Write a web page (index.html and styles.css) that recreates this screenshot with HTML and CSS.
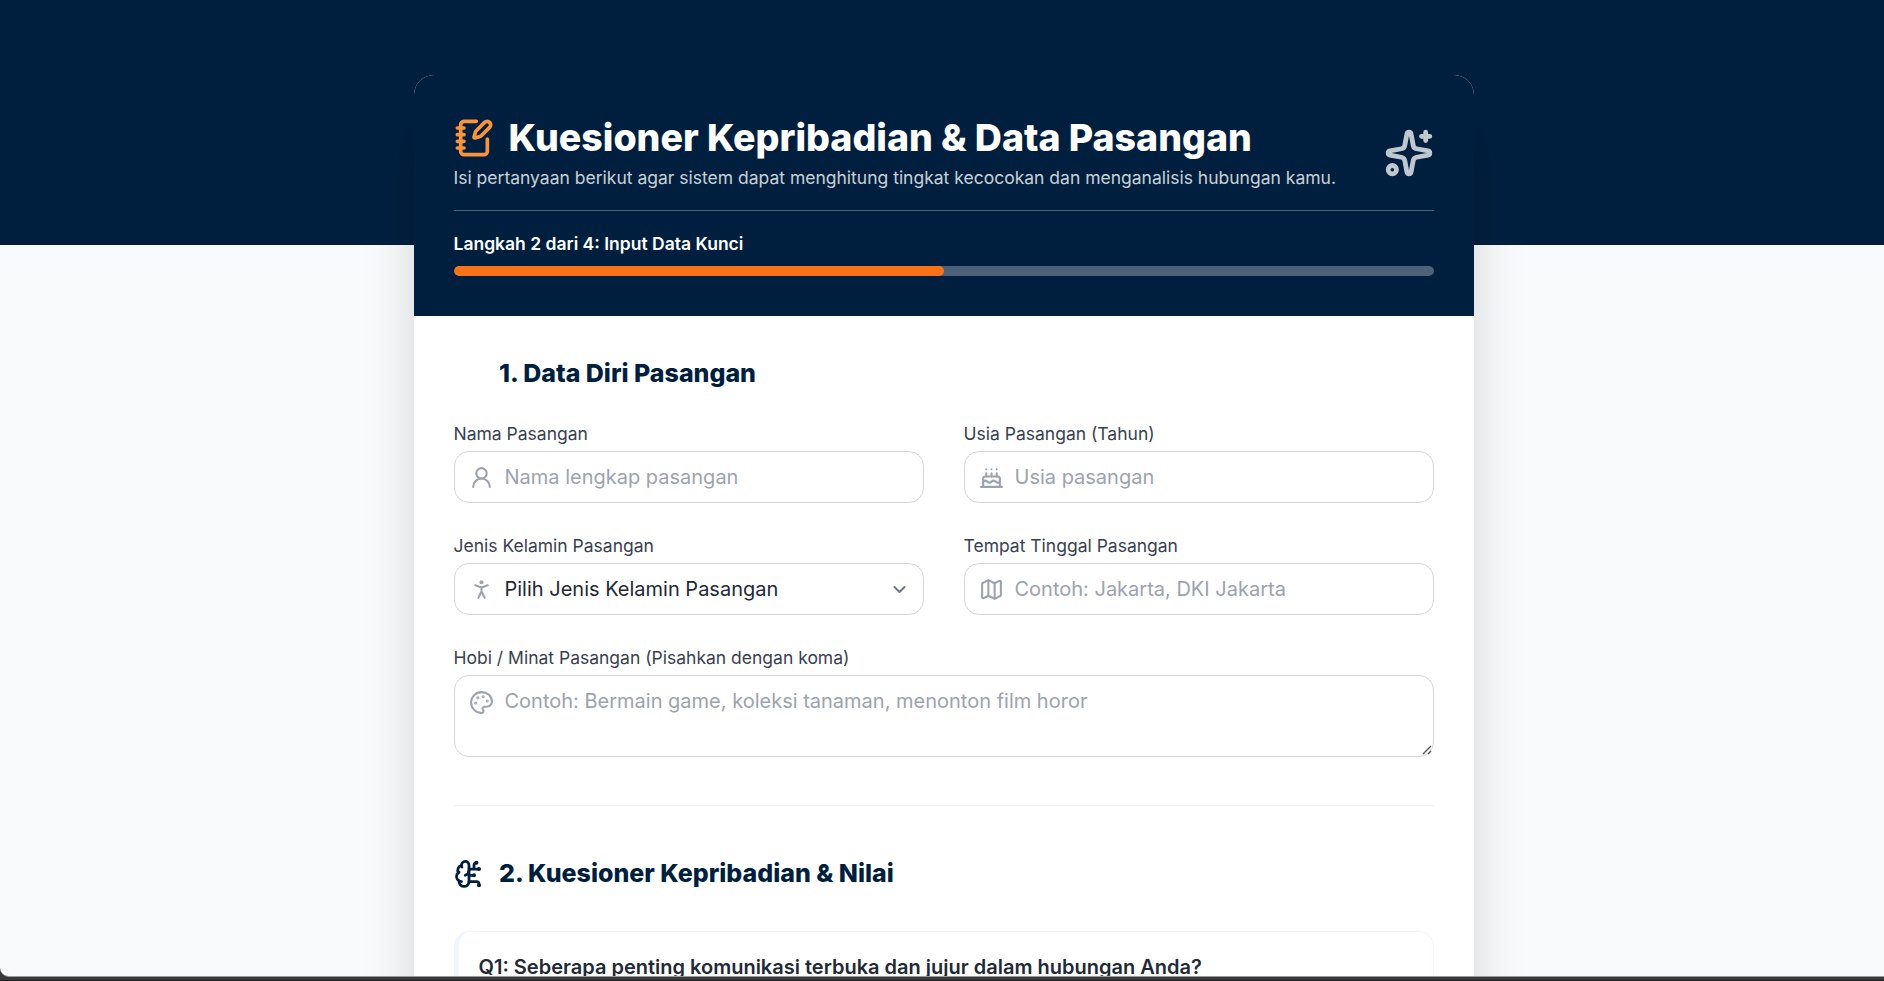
FILE: index.html
```html
<!DOCTYPE html>
<html lang="id">
<head>
<meta charset="utf-8">
<title>Kuesioner Kepribadian &amp; Data Pasangan</title>
<link rel="stylesheet" href="styles.css">
</head>
<body>
<div class="window">
  <div class="hero"></div>
  <main class="card">
    <header class="card-header">
      <div class="heading-row">
        <div>
          <h1 class="title">
            <svg class="icon title-icon" viewBox="0 0 24 24"><path d="M13.4 2H6a2 2 0 0 0-2 2v16a2 2 0 0 0 2 2h12a2 2 0 0 0 2-2v-7.4"/><path d="M2 6h4M2 10h4M2 14h4M2 18h4"/><path d="M21.378 5.626a1 1 0 1 0-3.004-3.004l-5.01 5.012a2 2 0 0 0-.506.854l-.837 2.87a.5.5 0 0 0 .62.62l2.87-.837a2 2 0 0 0 .854-.506z"/></svg>
            <span>Kuesioner Kepribadian &amp; Data Pasangan</span>
          </h1>
          <p class="subtitle">Isi pertanyaan berikut agar sistem dapat menghitung tingkat kecocokan dan menganalisis hubungan kamu.</p>
        </div>
        <svg class="icon sparkles" viewBox="0 0 24 24"><path d="M11.017 2.814a1 1 0 0 1 1.966 0l1.051 5.558a2 2 0 0 0 1.594 1.594l5.558 1.051a1 1 0 0 1 0 1.966l-5.558 1.051a2 2 0 0 0-1.594 1.594l-1.051 5.558a1 1 0 0 1-1.966 0l-1.051-5.558a2 2 0 0 0-1.594-1.594l-5.558-1.051a1 1 0 0 1 0-1.966l5.558-1.051a2 2 0 0 0 1.594-1.594z"/><path d="M20 2v4M22 4h-4"/><circle cx="4" cy="20" r="2"/></svg>
      </div>
      <div class="progress">
        <p class="step">Langkah 2 dari 4: Input Data Kunci</p>
        <div class="track"><div class="fill" style="width:50%"></div></div>
      </div>
    </header>
    <form class="body">
      <section class="section">
        <h2 class="section-title"><span class="section-icon"></span>1. Data Diri Pasangan</h2>
        <div class="grid">
          <label class="field"><span class="label">Nama Pasangan</span>
            <span class="control">
              <svg class="icon field-icon" viewBox="0 0 24 24"><circle cx="12" cy="8" r="5"/><path d="M20 21a8 8 0 0 0-16 0"/></svg>
              <input class="input" type="text" placeholder="Nama lengkap pasangan">
            </span>
          </label>
          <label class="field"><span class="label">Usia Pasangan (Tahun)</span>
            <span class="control">
              <svg class="icon field-icon" viewBox="0 0 24 24"><path d="M20 21v-8a2 2 0 0 0-2-2H6a2 2 0 0 0-2 2v8"/><path d="M4 16s.5-1 2-1 2.5 2 4 2 2.5-2 4-2 2.5 2 4 2 2-1 2-1"/><path d="M2 21h20M7 8v3M12 8v3M17 8v3M7 4h.01M12 4h.01M17 4h.01"/></svg>
              <input class="input" type="text" placeholder="Usia pasangan">
            </span>
          </label>
          <label class="field"><span class="label">Jenis Kelamin Pasangan</span>
            <span class="control">
              <svg class="icon field-icon" viewBox="0 0 24 24"><circle cx="12" cy="5" r="1"/><path d="m9 20 3-6 3 6M6 8l6 2 6-2M12 10v4"/></svg>
              <select class="input select"><option>Pilih Jenis Kelamin Pasangan</option></select>
              <svg class="chevron" viewBox="0 0 20 20"><path d="M6 8l4 4 4-4"/></svg>
            </span>
          </label>
          <label class="field"><span class="label">Tempat Tinggal Pasangan</span>
            <span class="control">
              <svg class="icon field-icon" viewBox="0 0 24 24"><path d="M14.106 5.553a2 2 0 0 0 1.788 0l3.659-1.83A1 1 0 0 1 21 4.619v12.764a1 1 0 0 1-.553.894l-4.553 2.277a2 2 0 0 1-1.788 0l-4.212-2.106a2 2 0 0 0-1.788 0l-3.659 1.83A1 1 0 0 1 3 19.381V6.618a1 1 0 0 1 .553-.894l4.553-2.277a2 2 0 0 1 1.788 0z"/><path d="M15 5.764v15M9 3.236v15"/></svg>
              <input class="input" type="text" placeholder="Contoh: Jakarta, DKI Jakarta">
            </span>
          </label>
          <label class="field wide"><span class="label">Hobi / Minat Pasangan (Pisahkan dengan koma)</span>
            <span class="control area">
              <svg class="icon field-icon" viewBox="0 0 24 24"><path d="M12 22a1 1 0 0 1 0-20 10 9 0 0 1 10 9 5 5 0 0 1-5 5h-2.25a1.75 1.75 0 0 0-1.4 2.8l.3.4a1.75 1.75 0 0 1-1.4 2.8z"/><g fill="currentColor"><circle cx="13.5" cy="6.5" r=".5"/><circle cx="17.5" cy="10.5" r=".5"/><circle cx="6.5" cy="12.5" r=".5"/><circle cx="8.5" cy="7.5" r=".5"/></g></svg>
              <textarea class="input textarea" placeholder="Contoh: Bermain game, koleksi tanaman, menonton film horor"></textarea>
              <svg class="grip" viewBox="0 0 10 10"><path d="M1 9L9 1M6 9L9 6"/></svg>
            </span>
          </label>
        </div>
      </section>
      <section class="section values">
        <h2 class="section-title"><svg class="icon section-icon" viewBox="0 0 24 24"><path d="M12 5a3 3 0 1 0-5.997.125 4 4 0 0 0-2.526 5.77 4 4 0 0 0 .556 6.588A4 4 0 1 0 12 18Z"/><path d="M9 13a4.5 4.5 0 0 0 3-4M6.003 5.125A3 3 0 0 0 6.401 6.5M3.477 10.896a4 4 0 0 1 .585-.396M6 18a4 4 0 0 1-1.967-.516M12 13h4M12 18h6a2 2 0 0 1 2 2v1M12 8h8M16 8V5a2 2 0 0 1 2-2"/><circle cx="16" cy="13" r=".5"/><circle cx="18" cy="3" r=".5"/><circle cx="20" cy="21" r=".5"/><circle cx="20" cy="8" r=".5"/></svg>2. Kuesioner Kepribadian &amp; Nilai</h2>
        <div class="question">Q1: Seberapa penting komunikasi terbuka dan jujur dalam hubungan Anda?</div>
      </section>
    </form>
  </main>
</div>
</body>
</html>
```

FILE: styles.css
```css
* { box-sizing: border-box; }
body { margin: 0; height: 981px; overflow: hidden; background: #383838; border-bottom: 1px solid #202022; font-family: Inter, "Liberation Sans", sans-serif; color: #1f2937; }
h1, h2, p { margin: 0; }
.window { height: 977px; overflow: hidden; background: #f9fafc; border-bottom: 1px solid #999c9c; border-bottom-left-radius: 9px; }
.icon { fill: none; stroke: currentColor; stroke-width: 2; stroke-linecap: round; stroke-linejoin: round; flex: none; }
.hero { height: 245px; background: #001f3f; }
.card { position: relative; width: 1060px; height: 1400px; margin: -170px auto 0 414px; border-radius: 20px; overflow: hidden; background: #fff; box-shadow: 0 31px 62px -15px rgba(0, 0, 0, .25); }
.card-header { background: #001f3f; color: #fff; padding: 40px; }
.heading-row { display: flex; justify-content: space-between; align-items: center; }
.title { display: flex; align-items: center; gap: 14.5px; font-size: 37.5px; line-height: 45px; font-weight: 800; }
.title-icon { width: 40px; height: 40px; color: #fb923c; stroke-width: 2.2; }
.subtitle { margin-top: 5px; margin-left: -.5px; font-size: 17.5px; line-height: 25px; color: rgba(255, 255, 255, .8); }
.sparkles { width: 50px; height: 50px; color: #bfc7cf; stroke-width: 2.3; }
.progress { margin-top: 20px; padding-top: 20px; border-top: 1px solid rgba(255, 255, 255, .3); }
.step { margin-left: -.5px; font-size: 17.5px; line-height: 25px; font-weight: 600; margin-bottom: 10px; }
.track { height: 10px; border-radius: 5px; overflow: hidden; background: rgba(255, 255, 255, .3); }
.fill { height: 100%; border-radius: 5px; background: #f97316; }
.body { padding: 40px; }
.section-title { display: flex; align-items: center; gap: 15px; font-size: 25px; line-height: 35px; font-weight: 800; letter-spacing: -.01px; color: #001f3f; }
.section-icon { width: 30px; height: 30px; stroke-width: 2.2; }
.grid { display: grid; grid-template-columns: 1fr 1fr; gap: 30px 40px; margin-top: 30px; }
.field { display: block; }
.wide { grid-column: 1 / -1; }
.label { display: block; margin-left: -.5px; margin-bottom: 5px; font-size: 17.5px; line-height: 25px; color: #374151; }
.control { position: relative; display: flex; align-items: center; height: 52px; padding-left: 14px; border: 1px solid #d1d5db; border-radius: 15px; }
.field-icon { width: 25px; height: 25px; color: #9ca3af; }
.input { flex: 1; min-width: 0; height: 50px; margin: 0; padding: 10px 0 10px 10.5px; border: 0; outline: 0; background: transparent; font: 20px/30px Inter, "Liberation Sans", sans-serif; color: #1f2937; appearance: none; }
.input::placeholder { color: #9ca3af; opacity: 1; }
.chevron { width: 25px; height: 25px; margin-right: 11.5px; fill: none; stroke: #6b7280; stroke-width: 1.5; stroke-linecap: round; stroke-linejoin: round; }
.area { height: 82px; align-items: flex-start; }
.area .field-icon { margin-top: 14px; }
.textarea { height: 80px; resize: none; }
.grip { position: absolute; right: 1px; bottom: 1px; width: 10px; height: 10px; fill: none; stroke: #555; stroke-width: 1.4; }
.values { margin-top: 48px; padding-top: 50px; border-top: 1px solid #f3f4f6; }
.question { margin-top: 40px; padding: 20px 20px 20px 19.5px; height: 200px; border: 1px solid #eff6ff; border-left-width: 5px; border-radius: 15px; font-size: 20px; line-height: 30px; font-weight: 600; }
```
